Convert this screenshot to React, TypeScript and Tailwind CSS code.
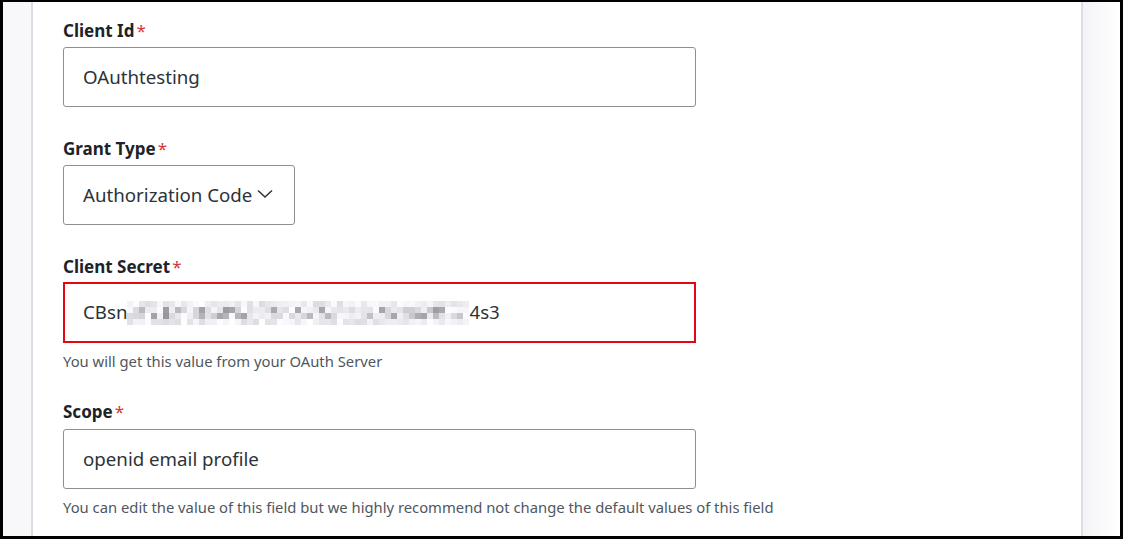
import React from "react";

const font = { fontFamily: '"Segoe UI", "Noto Sans", "Open Sans", sans-serif' };

function Pixelated() {
  const cols = 57;
  const rows = 4;
  const cells: React.ReactNode[] = [];
  let seed = 11;
  const rnd = () => {
    seed = (seed * 9301 + 49297) % 233280;
    return seed / 233280;
  };
  for (let r = 0; r < rows; r++) {
    for (let c = 0; c < cols; c++) {
      const v = rnd();
      const edge = r === 0 || r === rows - 1;
      let g: number;
      if (edge) g = Math.round(220 + 35 * v);
      else g = v < 0.3 ? Math.round(150 + 200 * v) : Math.round(195 + 60 * v);
      cells.push(
        <span
          key={`${r}-${c}`}
          style={{ backgroundColor: `rgb(${g},${g},${Math.min(255, g + 4)})` }}
        />
      );
    }
  }
  return (
    <span className="inline-grid grid-cols-[repeat(57,6px)] grid-rows-[repeat(4,6px)] h-[24px] w-[342px] align-middle">
      {cells}
    </span>
  );
}

function Label({ children }: { children: React.ReactNode }) {
  return (
    <div className="h-[24px] leading-[24px] text-[17px] font-bold text-[#1d2327]">
      {children}
      <span className="text-[#d63638] font-normal ml-[2px]">*</span>
    </div>
  );
}

export default function App() {
  return (
    <div
      className="w-[1123px] h-[539px] border-black border-t-2 border-l-[3px] border-r-[3px] border-b-[3px] flex bg-white overflow-hidden"
      style={font}
    >
      <div className="w-[28px] bg-[#f8f8fa]" />
      <div className="w-[2px] bg-[#dedde5]" />
      <div className="w-[1048px] bg-white pl-[30px] pt-[17px]">
        <Label>Client Id</Label>
        <div className="mt-[4px] w-[633px] h-[60px] border border-[#8c8f94] rounded-[3px] flex items-center pl-[19px] text-[18.7px] text-[#2c3338]">
          OAuthtesting
        </div>

        <div className="mt-[30px]">
          <Label>Grant Type</Label>
        </div>
        <div className="mt-[4px] w-[232px] h-[60px] border border-[#8c8f94] rounded-[3px] flex items-center pl-[19px] text-[18.7px] text-[#2c3338]">
          <span>Authorization Code</span>
          <svg width="18" height="18" viewBox="0 0 18 18" className="ml-[4px] mt-[-3px]">
            <path d="M2 5.5 L9 12 L16 5.5" fill="none" stroke="#2c3338" strokeWidth="1.5" />
          </svg>
        </div>

        <div className="mt-[30px]">
          <Label>Client Secret</Label>
        </div>
        <div className="mt-[3px] w-[633px] h-[61px] border-2 border-[#e30613] flex items-center pl-[18px] text-[18.7px] text-[#2c3338]">
          <span>CBsn</span>
          <Pixelated />
          <span>4s3</span>
        </div>
        <div className="mt-[8px] h-[20px] leading-[20px] text-[14.8px] text-[#50575e]">
          You will get this value from your OAuth Server
        </div>

        <div className="mt-[29px]">
          <Label>Scope</Label>
        </div>
        <div className="mt-[5px] w-[633px] h-[60px] border border-[#8c8f94] rounded-[3px] flex items-center pl-[19px] text-[18.7px] text-[#2c3338]">
          openid email profile
        </div>
        <div className="mt-[8px] h-[20px] leading-[20px] text-[14.8px] text-[#50575e]">
          You can edit the value of this field but we highly recommend not change the default values of this field
        </div>
      </div>
      <div className="w-[2px] bg-[#dedde5]" />
      <div className="flex-1 bg-gradient-to-r from-[#f4f4f7] to-white" />
    </div>
  );
}
